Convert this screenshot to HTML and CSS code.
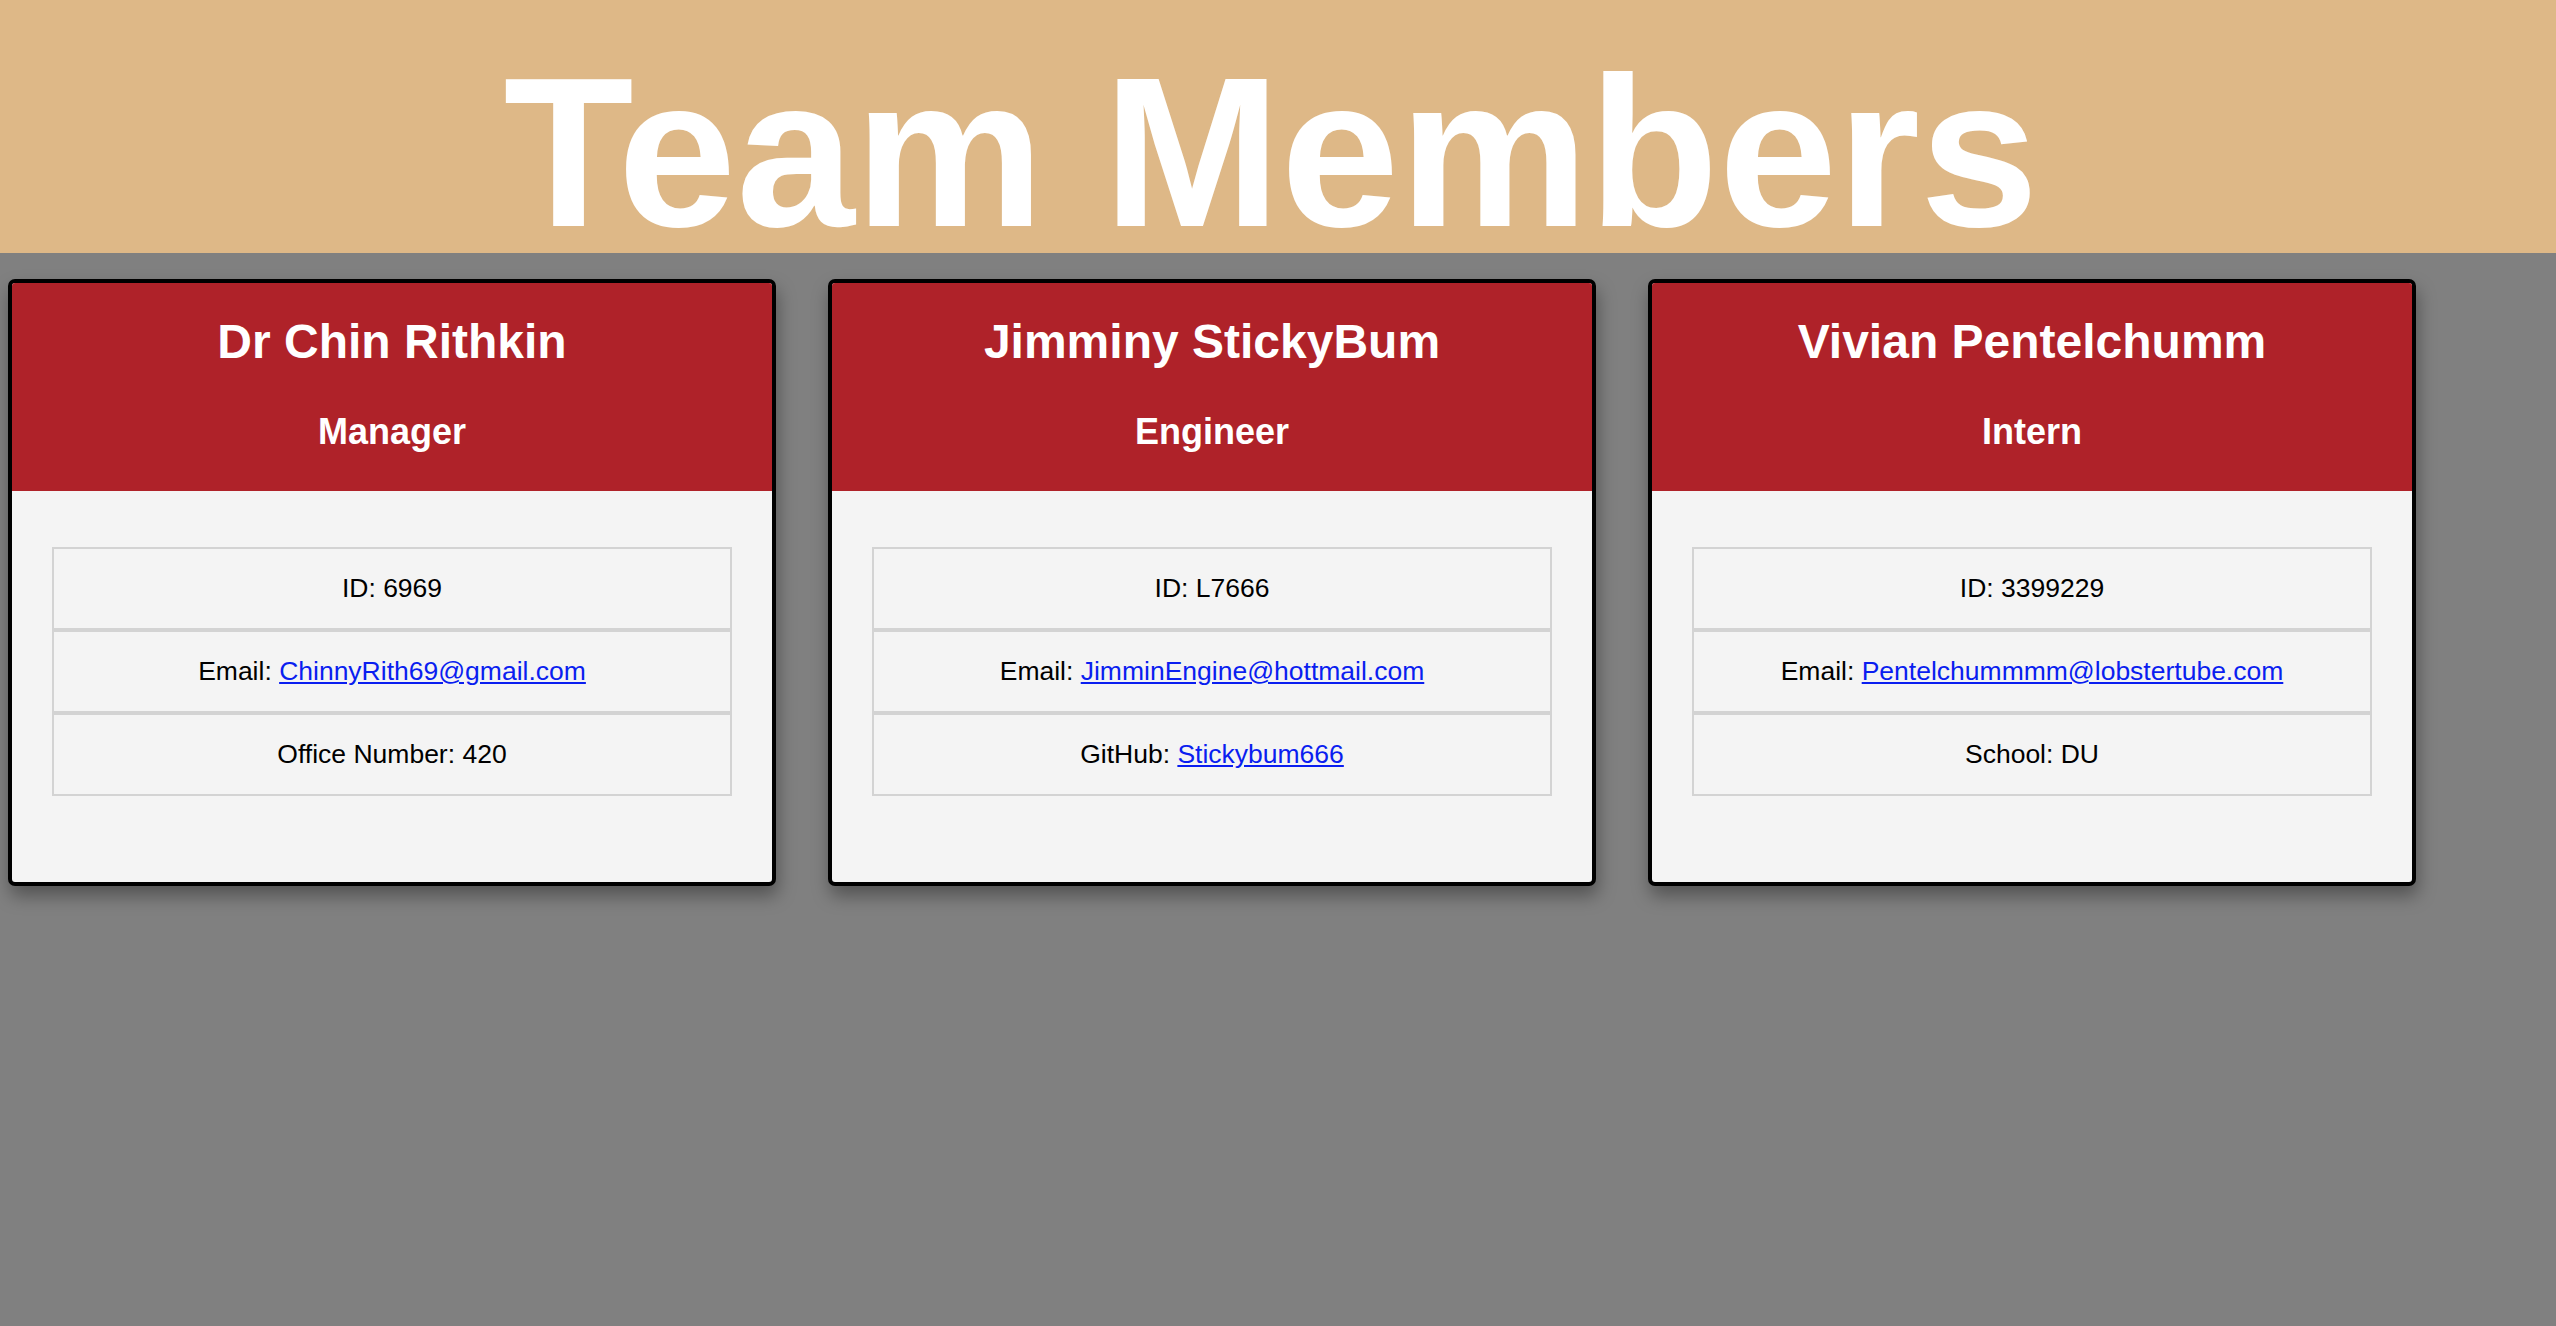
FILE: index.html
```html
<!DOCTYPE html>
<html lang="en">
<head>
<meta charset="UTF-8">
<title>Team Members</title>
<link rel="stylesheet" href="styles.css">
</head>
<body>
<header class="page-header">
  <h1 class="page-title">Team Members</h1>
</header>
<main class="team">
  <section class="card">
    <div class="card-head">
      <h2 class="card-name">Dr Chin Rithkin</h2>
      <h3 class="card-role">Manager</h3>
    </div>
    <div class="card-body">
      <ul class="info">
        <li class="info-item">ID: 6969</li>
        <li class="info-item">Email: <a href="mailto:ChinnyRith69@gmail.com">ChinnyRith69@gmail.com</a></li>
        <li class="info-item">Office Number: 420</li>
      </ul>
    </div>
  </section>
  <section class="card">
    <div class="card-head">
      <h2 class="card-name">Jimminy StickyBum</h2>
      <h3 class="card-role">Engineer</h3>
    </div>
    <div class="card-body">
      <ul class="info">
        <li class="info-item">ID: L7666</li>
        <li class="info-item">Email: <a href="mailto:JimminEngine@hottmail.com">JimminEngine@hottmail.com</a></li>
        <li class="info-item">GitHub: <a href="#">Stickybum666</a></li>
      </ul>
    </div>
  </section>
  <section class="card">
    <div class="card-head">
      <h2 class="card-name">Vivian Pentelchumm</h2>
      <h3 class="card-role">Intern</h3>
    </div>
    <div class="card-body">
      <ul class="info">
        <li class="info-item">ID: 3399229</li>
        <li class="info-item">Email: <a href="mailto:Pentelchummmm@lobstertube.com">Pentelchummmm@lobstertube.com</a></li>
        <li class="info-item">School: DU</li>
      </ul>
    </div>
  </section>
</main>
</body>
</html>
```

FILE: styles.css
```css
* {
  box-sizing: border-box;
}

html, body {
  margin: 0;
  padding: 0;
}

body {
  background: #808080;
  font-family: "Liberation Sans", Arial, Helvetica, sans-serif;
  color: #000;
  min-height: 1326px;
}

.page-header {
  background: #deb887;
  height: 253px;
  padding: 52px 14px 1px 0;
  text-align: center;
}

.page-title {
  margin: 0;
  font-size: 213px;
  line-height: 200px;
  font-weight: bold;
  color: #fff;
}

.team {
  display: flex;
  gap: 52px;
  padding: 26px 0 0 8px;
  align-items: flex-start;
}

.card {
  width: 768px;
  border: 4px solid #000;
  border-radius: 7px;
  overflow: hidden;
  background: #f4f4f4;
  box-shadow: 2px 10px 18px rgba(0, 0, 0, 0.35);
}

.card-head {
  background: #af2229;
  color: #fff;
  text-align: center;
  padding: 31px 0 39px;
}

.card-name {
  margin: 0;
  font-size: 48px;
  line-height: 55px;
  font-weight: bold;
}

.card-role {
  margin: 42px 0 0;
  font-size: 36px;
  line-height: 41px;
  font-weight: bold;
}

.card-body {
  padding: 56px 40px 86px;
}

.info {
  list-style: none;
  margin: 0;
  padding: 0;
}

.info-item {
  border: 2px solid #d3d3d3;
  padding: 24px 0;
  font-size: 26.5px;
  line-height: 31px;
  text-align: center;
}

.info-item a {
  color: #0a1ef0;
  text-decoration: underline;
}
```
